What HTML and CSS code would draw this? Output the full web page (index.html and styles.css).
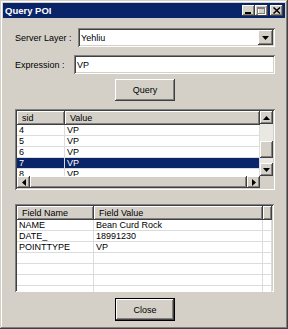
FILE: index.html
```html
<!DOCTYPE html>
<html lang="en">
  <head>
    <meta charset="UTF-8" />
    <title>Query POI</title>
    <link rel="stylesheet" href="styles.css">
  </head>
  <body>
    <div class="window">
      <div class="titlebar">
        <span class="title">Query POI</span>
        <div class="caption-buttons">
          <span class="cap-btn">
            <svg width="7" height="7" viewBox="0 0 7 7"><rect x="0" y="5" width="6" height="2" fill="#000"/></svg>
          </span>
          <span class="cap-btn">
            <svg width="9" height="8" viewBox="0 0 9 8"><rect x="1.5" y="1.5" width="7" height="6" fill="none" stroke="#fff"/><rect x="0.5" y="0.5" width="7" height="6" fill="none" stroke="#808080"/><rect x="0" y="0" width="8" height="2" fill="#808080"/></svg>
          </span>
          <span class="cap-btn close">
            <svg width="8" height="7" viewBox="0 0 8 7"><path d="M0.5 0.5 L7 6.5 M7 0.5 L0.5 6.5" stroke="#000" stroke-width="1.5"/></svg>
          </span>
        </div>
      </div>

      <div class="content">
        <div class="field-row layer-row">
          <label class="label layer-label">Server Layer :</label>
          <div class="combo sunken">
            <span class="combo-text">Yehliu</span>
            <span class="combo-btn raised">
              <svg width="7" height="4" viewBox="0 0 7 4"><path d="M0 0 H7 L3.5 4 Z" fill="#000"/></svg>
            </span>
          </div>
        </div>

        <div class="field-row expr-row">
          <label class="label expr-label">Expression :</label>
          <div class="textbox sunken">VP</div>
        </div>

        <div class="button-row">
          <button class="btn raised">Query</button>
        </div>

        <div class="list sunken">
          <div class="list-view">
            <div class="row head-row cols-list">
              <div class="head">sid</div>
              <div class="head">Value</div>
            </div>
            <div class="row cols-list"><div class="cell">4</div><div class="cell">VP</div></div>
            <div class="row cols-list"><div class="cell">5</div><div class="cell">VP</div></div>
            <div class="row cols-list"><div class="cell">6</div><div class="cell">VP</div></div>
            <div class="row cols-list selected"><div class="cell">7</div><div class="cell">VP</div></div>
            <div class="row cols-list"><div class="cell">8</div><div class="cell">VP</div></div>
          </div>
          <div class="vscroll">
            <span class="sb-btn raised">
              <svg width="7" height="4" viewBox="0 0 7 4"><path d="M0 4 H7 L3.5 0 Z" fill="#000"/></svg>
            </span>
            <span class="vthumb raised"></span>
            <span class="sb-btn raised down">
              <svg width="7" height="4" viewBox="0 0 7 4"><path d="M0 0 H7 L3.5 4 Z" fill="#000"/></svg>
            </span>
          </div>
          <div class="hscroll">
            <span class="sb-btn raised">
              <svg width="4" height="7" viewBox="0 0 4 7"><path d="M4 0 V7 L0 3.5 Z" fill="#000"/></svg>
            </span>
            <span class="hthumb raised"></span>
            <span class="sb-btn raised">
              <svg width="4" height="7" viewBox="0 0 4 7"><path d="M0 0 V7 L4 3.5 Z" fill="#000"/></svg>
            </span>
          </div>
          <div class="corner"></div>
        </div>

        <div class="grid sunken">
          <div class="row head-row cols-grid">
            <div class="head">Field Name</div>
            <div class="head">Field Value</div>
            <div class="head"></div>
          </div>
          <div class="row cols-grid"><div class="cell">NAME</div><div class="cell">Bean Curd Rock</div><div class="cell"></div></div>
          <div class="row cols-grid"><div class="cell">DATE_</div><div class="cell">18991230</div><div class="cell"></div></div>
          <div class="row cols-grid"><div class="cell">POINTTYPE</div><div class="cell">VP</div><div class="cell"></div></div>
          <div class="row cols-grid"><div class="cell"></div><div class="cell"></div><div class="cell"></div></div>
          <div class="row cols-grid"><div class="cell"></div><div class="cell"></div><div class="cell"></div></div>
          <div class="row cols-grid"><div class="cell"></div><div class="cell"></div><div class="cell"></div></div>
          <div class="row cols-grid"><div class="cell"></div><div class="cell"></div><div class="cell"></div></div>
        </div>

        <div class="button-row close-row">
          <button class="btn raised default">Close</button>
        </div>
      </div>
    </div>
  </body>
</html>
```

FILE: styles.css
```css
body {
  margin: 0;
  font-family: "Liberation Sans", Arial, sans-serif;
  font-size: 9px;
  color: #000;
}
.window {
  width: 288px;
  height: 329px;
  box-sizing: border-box;
  padding: 3px;
  background: #d4d0c8;
  box-shadow: inset -1px -1px #404040, inset 1px 1px #d4d0c8,
    inset -2px -2px #808080, inset 2px 2px #fff;
  display: flex;
  flex-direction: column;
}
.raised {
  background: #d4d0c8;
  box-shadow: inset -1px -1px #404040, inset 1px 1px #fff,
    inset -2px -2px #808080, inset 2px 2px #d4d0c8;
}
.sunken {
  box-sizing: border-box;
  background: #fff;
  box-shadow: inset 1px 1px #808080, inset -1px -1px #fff,
    inset 2px 2px #404040, inset -2px -2px #d4d0c8;
}

/* title bar */
.titlebar {
  height: 15px;
  background: #0a246a;
  color: #fff;
  display: flex;
  align-items: center;
  justify-content: space-between;
  padding: 0 2px 0 2px;
}
.title {
  font-weight: bold;
  font-size: 9.5px;
}
.caption-buttons {
  display: flex;
}
.cap-btn {
  width: 13px;
  height: 11px;
  display: flex;
  align-items: center;
  justify-content: center;
  background: #d4d0c8;
  box-shadow: inset -1px -1px #404040, inset 1px 1px #fff,
    inset -2px -2px #808080;
}
.cap-btn.close {
  margin-left: 2px;
}

/* form */
.content {
  flex: 1;
  display: flex;
  flex-direction: column;
  padding: 0 10px 0 12px;
}
.field-row {
  display: flex;
  align-items: center;
  height: 19px;
}
.layer-row {
  margin-top: 10px;
}
.expr-row {
  margin-top: 8px;
}
.label {
  flex-shrink: 0;
}
.layer-label {
  width: 63px;
}
.expr-label {
  width: 59px;
}
.combo,
.textbox {
  flex: 1;
  height: 19px;
  display: flex;
  align-items: center;
  padding: 2px 2px 2px 3px;
}
.combo-text {
  flex: 1;
}
.combo-btn {
  width: 15px;
  height: 15px;
  display: flex;
  align-items: center;
  justify-content: center;
}
.button-row {
  display: flex;
  justify-content: center;
  margin-top: 5px;
}
.btn {
  width: 60px;
  height: 22px;
  border: 0;
  padding: 0;
  font-family: inherit;
  font-size: 9px;
  color: #000;
}
.close-row {
  margin-top: 6px;
}
.btn.default {
  height: 23px;
  border: 1px solid #000;
}

/* list with scrollbars */
.list {
  margin-top: 8px;
  width: 260px;
  height: 81px;
  padding: 2px;
  display: grid;
  grid-template-columns: 1fr 13px;
  grid-template-rows: 1fr 12px;
}
.list-view {
  overflow: hidden;
  background: #fff;
}
.row {
  display: grid;
  height: 11px;
}
.cols-list {
  grid-template-columns: 48px 1fr;
}
.cols-grid {
  grid-template-columns: 77px 169px 1fr;
}
.head-row {
  height: 14px;
}
.head {
  background: #d4d0c8;
  box-shadow: inset -1px -1px #404040, inset 1px 1px #fff,
    inset -2px -2px #808080;
  padding-left: 5px;
  line-height: 14px;
  white-space: nowrap;
}
.cell {
  box-sizing: border-box;
  border-right: 1px solid #dcdcdc;
  border-bottom: 1px solid #dcdcdc;
  padding-left: 2px;
  line-height: 10px;
  white-space: nowrap;
  overflow: hidden;
}
.selected .cell {
  background: #0a246a;
  color: #fff;
}
.vscroll {
  display: flex;
  flex-direction: column;
  background: #eae8e2;
}
.sb-btn {
  flex-shrink: 0;
  width: 13px;
  height: 13px;
  display: flex;
  align-items: center;
  justify-content: center;
}
.vscroll .sb-btn {
  width: 13px;
}
.vthumb {
  margin-top: 17px;
  height: 17px;
}
.sb-btn.down {
  margin-top: auto;
}
.hscroll {
  display: flex;
  background: #eae8e2;
}
.hscroll .sb-btn {
  height: 12px;
}
.hthumb {
  flex: 1;
}
.corner {
  background: #d4d0c8;
}

/* field grid */
.grid {
  margin-top: 14px;
  width: 259px;
  height: 88px;
  padding: 2px;
  overflow: hidden;
}
.grid .cell {
  background: #fff;
}
```
